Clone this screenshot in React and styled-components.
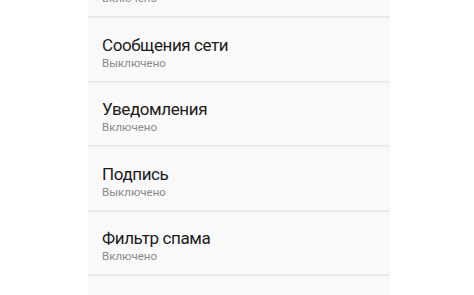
import React from "react";
import styled, { createGlobalStyle } from "styled-components";

const Global = createGlobalStyle`
  html, body {
    margin: 0;
    padding: 0;
    background: #ffffff;
    font-family: Roboto, "Noto Sans", "Liberation Sans", sans-serif;
  }
  body {
    width: 474px;
    height: 295px;
    overflow: hidden;
  }
`;

const Page = styled.div`
  width: 474px;
  height: 295px;
  overflow: hidden;
  display: flex;
  align-items: flex-start;
  padding-left: 88px;
  box-sizing: border-box;
`;

const List = styled.div`
  width: 302px;
  margin-top: -46.5px;
  display: flex;
  flex-direction: column;
  flex-shrink: 0;
  background: #f9f9f9;
`;

const Row = styled.div`
  height: 64.5px;
  flex-shrink: 0;
  box-sizing: border-box;
  border-bottom: 2px solid #ebebeb;
  padding: 16.5px 14px 0;
  display: flex;
  flex-direction: column;
`;

const Title = styled.div`
  font-size: 17px;
  line-height: 20px;
  letter-spacing: -0.4px;
  color: #1c1c1c;
`;

const Sub = styled.div`
  font-size: 11.5px;
  line-height: 16px;
  color: #8a8a8a;
`;

const items = [
  { title: "Автоудаление", sub: "Включено" },
  { title: "Сообщения сети", sub: "Выключено" },
  { title: "Уведомления", sub: "Включено" },
  { title: "Подпись", sub: "Выключено" },
  { title: "Фильтр спама", sub: "Включено" },
  { title: "Дополнительно", sub: "" },
];

export default function App() {
  return (
    <>
      <Global />
      <Page>
        <List>
          {items.map((it) => (
            <Row key={it.title}>
              <Title>{it.title}</Title>
              {it.sub && <Sub>{it.sub}</Sub>}
            </Row>
          ))}
        </List>
      </Page>
    </>
  );
}
